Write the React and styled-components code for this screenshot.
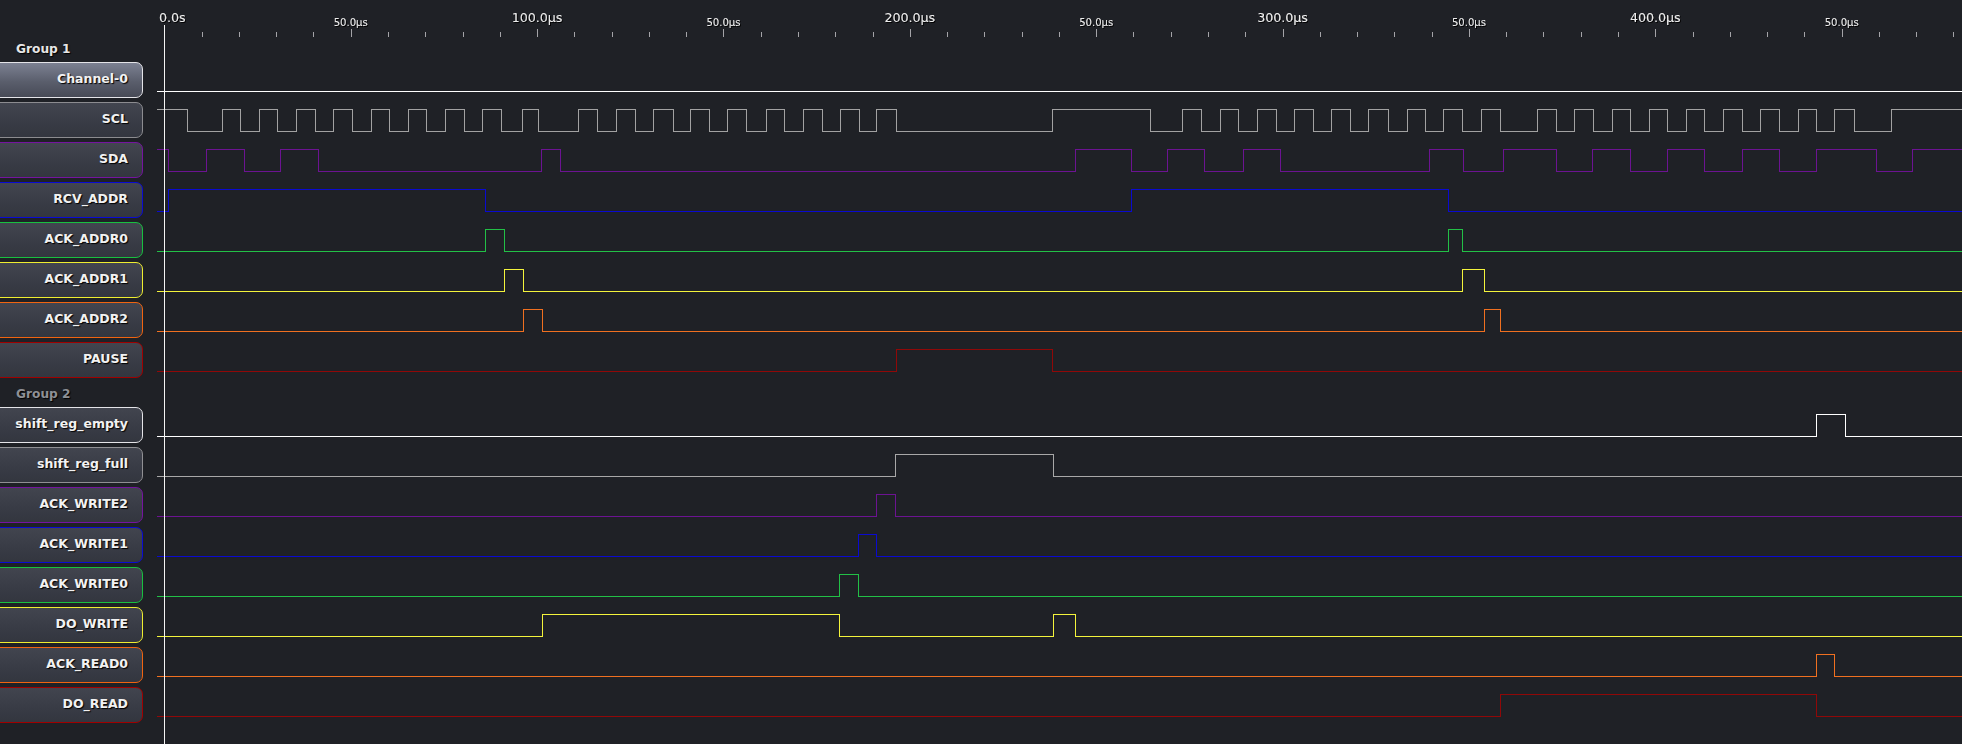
import React from 'react';
import styled, { createGlobalStyle } from 'styled-components';

const GlobalStyle = createGlobalStyle`
  html, body {
    margin: 0;
    padding: 0;
    background: #1f2126;
  }
  body {
    font-family: "DejaVu Sans", "Noto Sans", sans-serif;
  }
`;

// layout constants (page pixels)
const LABEL_W = 157;
const PAGE_W = 1962;
const TICK0 = 164.3;
const TICK_STEP = 37.275;
const HIGH = 7.5;
const LOW = 29.5;

const groups = [
  {
    name: 'Group 1',
    dim: false,
    traces: [
      { name: 'Channel-0', color: '#ffffff', border: '#e4e4e8', selected: true, init: 0, edges: [] },
      {
        name: 'SCL', color: '#a2a2a2', border: '#8c8c90', init: 1,
        edges: [187.3, 221.6, 239.5, 258.5, 277.2, 295.5, 314.6, 332.5, 351.5, 370.6, 388.5, 407.5, 426.2, 444.5,
          463.6, 481.5, 500.5, 522.3, 537.5, 578.3, 597.4, 616.4, 634.7, 653.4, 672.5, 690.4, 709.4, 727.3, 746.4,
          765.6, 783.5, 802.5, 821.6, 839.5, 858.5, 876.4, 895.5, 1052.3, 1149.5, 1182.2, 1201.3, 1219.6, 1238.2,
          1257.3, 1275.6, 1294.3, 1312.5, 1331.2, 1350.3, 1368.3, 1387.5, 1406.6, 1424.5, 1443.3, 1462.4, 1480.8,
          1499.5, 1536.6, 1555.7, 1573.7, 1592.8, 1611.5, 1629.5, 1648.6, 1667.3, 1685.7, 1704.4, 1722.8, 1741.5,
          1760.2, 1778.6, 1797.7, 1816.4, 1834.4, 1853.5, 1890.6],
      },
      {
        name: 'SDA', color: '#6c1392', border: '#7514a0', init: 1,
        edges: [168.3, 206.4, 243.8, 280.3, 317.7, 541.4, 560.4, 1074.5, 1130.5, 1167.4, 1204.4, 1242.5, 1279.5,
          1428.5, 1462.8, 1503.4, 1555.7, 1592.4, 1629.5, 1667.3, 1704.4, 1741.5, 1778.6, 1816.4, 1875.8, 1912.4],
      },
      { name: 'RCV_ADDR', color: '#0a0ad0', border: '#0a0ad4', init: 0, edges: [168.3, 485.3, 1130.5, 1447.6] },
      { name: 'ACK_ADDR0', color: '#22c046', border: '#18c040', init: 0, edges: [485.3, 504.4, 1447.6, 1462.4] },
      { name: 'ACK_ADDR1', color: '#f4f43c', border: '#eeee30', init: 0, edges: [504.4, 522.7, 1462.4, 1484.3] },
      { name: 'ACK_ADDR2', color: '#f07020', border: '#f06410', init: 0, edges: [522.7, 541.8, 1484.3, 1499.5] },
      { name: 'PAUSE', color: '#900808', border: '#a00000', init: 0, edges: [895.5, 1052.3] },
    ],
  },
  {
    name: 'Group 2',
    dim: true,
    traces: [
      { name: 'shift_reg_empty', color: '#ffffff', border: '#e4e4e8', init: 0, edges: [1816.4, 1845.3] },
      { name: 'shift_reg_full', color: '#a8a8a8', border: '#909094', init: 0, edges: [895.4, 1052.5] },
      { name: 'ACK_WRITE2', color: '#6c1392', border: '#7514a0', init: 0, edges: [876.3, 895.4] },
      { name: 'ACK_WRITE1', color: '#0a0ad0', border: '#0a0ad4', init: 0, edges: [858.4, 876.3] },
      { name: 'ACK_WRITE0', color: '#22c046', border: '#18c040', init: 0, edges: [839.3, 858.4] },
      { name: 'DO_WRITE', color: '#f4f43c', border: '#eeee30', init: 0, edges: [541.7, 839.3, 1052.5, 1074.5] },
      { name: 'ACK_READ0', color: '#f07020', border: '#f06410', init: 0, edges: [1816.4, 1834.3] },
      { name: 'DO_READ', color: '#900808', border: '#a00000', init: 0, edges: [1499.5, 1816.4] },
    ],
  },
];

const Page = styled.div`
  position: relative;
  width: ${PAGE_W}px;
  height: 744px;
  overflow: hidden;
  background: #1f2126;
`;

const Ruler = styled.div`
  display: flex;
  height: 37px;
`;

const Gutter = styled.div`
  width: ${LABEL_W}px;
  flex-shrink: 0;
`;

const RulerCanvas = styled.svg`
  display: block;
  flex: 1;
  overflow: visible;
`;

const GroupHeader = styled.div`
  height: 25px;
  display: flex;
  align-items: center;
  padding-left: 16px;
  padding-bottom: 1px;
  box-sizing: border-box;
  font-size: 12.2px;
  font-weight: bold;
  color: ${({ $dim }) => ($dim ? '#8e9096' : '#e6e6e6')};
  text-shadow: 1px 1px 1px #000;
`;

const Row = styled.div`
  display: flex;
  height: 40px;
`;

const LabelCell = styled.div`
  width: ${LABEL_W}px;
  flex-shrink: 0;
`;

const LabelBox = styled.div`
  box-sizing: border-box;
  margin-left: -12px;
  width: 155px;
  height: 36px;
  display: flex;
  align-items: center;
  justify-content: flex-end;
  padding: 0 14px 3px 0;
  border: 1.5px solid ${({ $border }) => $border};
  border-radius: 7px;
  background: ${({ $selected }) =>
    $selected
      ? 'linear-gradient(to bottom, #7c8192 0%, #5a5e6c 55%, #474a56 100%)'
      : 'linear-gradient(to bottom, #42454f 0%, #383b45 60%, #33363f 100%)'};
  color: #f2f2f2;
  font-size: 12.5px;
  font-weight: bold;
  text-shadow: 1px 1px 1px #000;
  white-space: nowrap;
`;

const TraceCanvas = styled.svg`
  display: block;
  flex: 1;
`;

const Cursor = styled.div`
  position: absolute;
  left: 164px;
  top: 25px;
  bottom: 0;
  width: 1px;
  background: #f4f4f4;
`;

const px = (x) => Math.round(x) + 0.5;

function tracePath(init, edges) {
  let level = init;
  let d = `M${LABEL_W} ${level ? HIGH : LOW}`;
  edges.forEach((e) => {
    const x = px(e);
    level = level ? 0 : 1;
    d += ` H${x} V${level ? HIGH : LOW}`;
  });
  d += ` H${PAGE_W}`;
  return d;
}

function rulerLabel(i) {
  if (i === 0) return { text: '0.0s', big: true };
  if (i % 10 === 0) return { text: `${i * 10}.0µs`, big: true };
  if (i % 5 === 0) return { text: '50.0µs', big: false };
  return null;
}

const TimeRuler = () => {
  const ticks = [];
  for (let i = 0; i <= 48; i++) ticks.push(i);
  return (
    <Ruler>
      <Gutter />
      <RulerCanvas viewBox={`${LABEL_W} 0 ${PAGE_W - LABEL_W} 37`} width={PAGE_W - LABEL_W} height={37}>
        <defs>
          <filter id="shadow" x="-10%" y="-30%" width="130%" height="160%">
            <feDropShadow dx="1" dy="1" stdDeviation="0.6" floodColor="#000" floodOpacity="0.9" />
          </filter>
        </defs>
        {ticks.map((i) => {
          const x = px(TICK0 + i * TICK_STEP);
          const major = i % 5 === 0;
          return i === 0 ? null : (
            <line key={i} x1={x} x2={x} y1={major ? 29 : 32} y2={37} stroke="#a4a4a8" strokeWidth="1" shapeRendering="crispEdges" />
          );
        })}
        {ticks.map((i) => {
          const lab = rulerLabel(i);
          if (!lab) return null;
          const x = TICK0 + i * TICK_STEP;
          return (
            <text
              key={`t${i}`}
              x={i === 0 ? 159 : x}
              y={lab.big ? 22 : 26}
              textAnchor={i === 0 ? 'start' : 'middle'}
              fontFamily="DejaVu Sans, sans-serif"
              fontSize={lab.big ? 12.6 : 10}
              fill="#ececec"
              filter="url(#shadow)"
            >
              {lab.text}
            </text>
          );
        })}
      </RulerCanvas>
    </Ruler>
  );
};

const TraceRow = ({ trace }) => (
  <Row>
    <LabelCell>
      <LabelBox $border={trace.border} $selected={trace.selected}>{trace.name}</LabelBox>
    </LabelCell>
    <TraceCanvas viewBox={`${LABEL_W} 0 ${PAGE_W - LABEL_W} 40`} width={PAGE_W - LABEL_W} height={40}>
      <path
        d={tracePath(trace.init, trace.edges)}
        fill="none"
        stroke={trace.color}
        strokeWidth="1"
        shapeRendering="crispEdges"
      />
    </TraceCanvas>
  </Row>
);

const App = () => {
  return (
    <Page>
      <GlobalStyle />
      <TimeRuler />
      {groups.map((g) => (
        <React.Fragment key={g.name}>
          <GroupHeader $dim={g.dim}>{g.name}</GroupHeader>
          {g.traces.map((t) => (
            <TraceRow key={t.name} trace={t} />
          ))}
        </React.Fragment>
      ))}
      <Cursor />
    </Page>
  );
};

export default App;
